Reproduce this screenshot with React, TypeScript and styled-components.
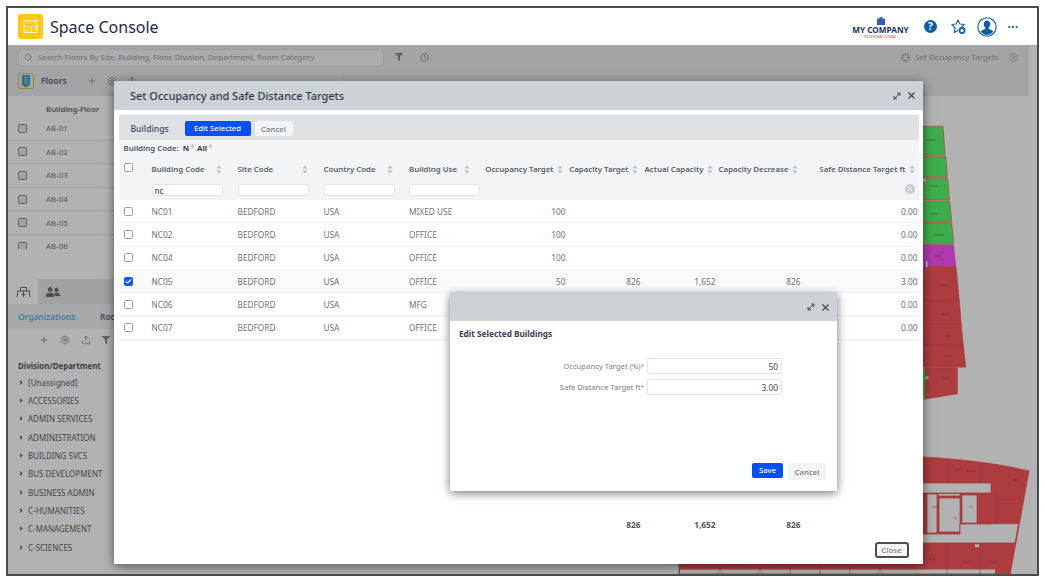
import React from 'react';
import styled, { createGlobalStyle } from 'styled-components';
import { Search, Clock, Plus, Settings, Upload, X, MoveDiagonal, Crosshair, Check, Square, BarChart3 } from 'lucide-react';
import { FaUserFriends, FaFilter, FaCaretRight } from 'react-icons/fa';

const Global = createGlobalStyle`
  html, body { margin: 0; padding: 0; background: #fff; }
  * { box-sizing: border-box; }
  body { font-family: "Noto Sans", "Open Sans", sans-serif; overflow: hidden; }
`;

const Frame = styled.div`
  position: relative; margin: 6px; width: 1033px; height: 570px; border: 2px solid #4b4b4d;
  background: #fff; overflow: hidden; display: flex; flex-direction: column;
`;
const TopBar = styled.header`
  height: 37px; flex: none; display: flex; align-items: center; padding: 0 19px 0 10px; background: #fff;
`;
const AppName = styled.h1`
  margin: 0 0 0 7px; font-size: 16px; font-weight: 400; color: #1b2b4b; line-height: 24px; letter-spacing: 0;
`;
const TopRight = styled.div`margin-left: auto; display: flex; align-items: center;`;
const Company = styled.div`
  width: 57px; margin-right: 15px; display: flex; flex-direction: column; align-items: center; margin-top: 2px;
`;
const CompanyName = styled.span`font-size: 8.2px; font-weight: 700; line-height: 9px; color: #24365e; white-space: nowrap;`;
const CompanySub = styled.span`font-size: 4.2px; line-height: 5px; color: #d9534f; letter-spacing: .1px;`;
const HelpDot = styled.span`
  width: 13px; height: 13px; border-radius: 50%; background: #0d5cab; color: #fff; font-size: 10px; font-weight: 700;
  line-height: 13px; text-align: center; margin-right: 14px;
`;
const TopIcon = styled.span<{ $gap: number }>`display: flex; margin-right: ${p => p.$gap}px;`;

const Workspace = styled.div`flex: 1; min-height: 0; display: flex; flex-direction: column; border-top: 1px solid #ececec;`;
const Band = styled.div`
  height: 50px; flex: none; margin-right: 8px; background: #e8ebef; display: flex; flex-direction: column;
`;
const SearchRow = styled.div`height: 25px; flex: none; display: flex; align-items: center; padding: 0 0 3px 10px;`;
const SearchBox = styled.div`
  width: 366px; height: 17px; border: 1px solid #dfe1e4; border-radius: 2px; background: #f4f6f9;
  display: flex; align-items: center; padding-left: 5px; gap: 5px; color: #9da0a4; font-size: 7.85px;
`;
const IconSlot = styled.span<{ $x: number; $c?: string }>`
  display: flex; margin-left: ${p => p.$x}px; color: ${p => p.$c || '#8b8e93'};
`;
const TargetsLink = styled.span`font-size: 7.9px; color: #9da0a4; margin-left: 5px;`;
const ToolsRow = styled.div`height: 25px; flex: none; display: flex; align-items: center; padding: 0 0 5px 10px; overflow: hidden;`;
const FloorsBadge = styled.span`
  width: 16px; height: 16px; border: 1px solid #f1c232; border-radius: 2px; display: flex; align-items: center; justify-content: center;
`;
const FloorsLabel = styled.span`margin-left: 7px; font-size: 8.6px; font-weight: 600; color: #5f6368;`;
const Splitter = styled.span`width: 4px; height: 25px; margin: -14px 0 0 200px; background: #f0f1f2; flex: none;`;
const Crumb = styled.span`margin: 13px 0 0 14px; font-size: 8px; font-weight: 600; color: #55668a; white-space: nowrap; width: 195px;`;
const GhostTools = styled.div`display: flex; margin-top: 11px;`;

const Body = styled.div`flex: 1; min-height: 0; display: flex;`;
const Sidebar = styled.aside`width: 333px; flex: none; display: flex; flex-direction: column;`;
const ListPane = styled.div`height: 153px; flex: none; overflow: hidden; margin-bottom: 30px;`;
const ListHead = styled.div`
  height: 21px; padding: 5px 0 0 38px; font-size: 7.8px; font-weight: 600; color: #6b6e73; line-height: 17px;
`;
const FloorRow = styled.div`
  height: 23.6px; display: flex; align-items: center; border-bottom: 1px solid #e4e4e4; padding-left: 10px;
  font-size: 7.9px; color: #7a7c80;
`;
const FloorCode = styled.span`margin-left: 19px;`;
const TabStrip = styled.div`height: 25px; flex: none; display: flex; background: #e6e8eb;`;
const IconTab = styled.div<{ $on?: boolean }>`
  width: 30px; display: flex; align-items: center; justify-content: center; background: ${p => p.$on ? '#fff' : 'transparent'}; color: #6d7074;
`;
const SubTabs = styled.div`
  height: 25px; flex: none; display: flex; align-items: center; padding-left: 10px; background: #f0f2f4; font-size: 8.4px; font-weight: 600; color: #6d7074;
`;
const SubTab = styled.span<{ $on?: boolean }>`
  width: 82px; color: ${p => p.$on ? '#58b8dc' : '#6d7074'};
`;
const TreeTools = styled.div`height: 22px; flex: none; display: flex; align-items: center; padding-left: 31px; gap: 11px; color: #8a8d92;`;
const TreeTitle = styled.div`padding: 8px 0 0 10px; height: 22px; font-size: 7.9px; font-weight: 700; color: #575b62; line-height: 14px;`;
const TreeItem = styled.div`
  height: 18.35px; display: flex; align-items: center; padding-left: 10px; font-size: 8px; color: #64676c; gap: 3px; white-space: nowrap;
  & > svg { color: #64676c; flex: none; }
`;
const Canvas = styled.main`flex: 1; min-width: 0; & > svg { display: block; }`;
const Dim = styled.div`position: absolute; left: 0; right: 0; top: 37px; bottom: 0; background: rgba(0,0,0,.3);`;

const Dialog = styled.section`
  position: absolute; left: 106px; top: 73px; width: 809px; height: 483px; background: #fff;
  box-shadow: 0 2px 10px rgba(0,0,0,.55); display: flex; flex-direction: column;
`;
const DialogHead = styled.div<{ $h: number }>`
  height: ${p => p.$h}px; flex: none; background: #cdd2d6; display: flex; align-items: center; padding: 0 6px 0 16px; color: #3e4650;
`;
const DialogTitle = styled.h2`margin: 0; font-size: 10.95px; font-weight: 500; color: #2f3a4c; flex: 1; line-height: 16px;`;
const HeadIcons = styled.div`display: flex; align-items: center; gap: 4px;`;
const DialogBody = styled.div`flex: 1; min-height: 0; padding: 5px 4.5px 6px; display: flex; flex-direction: column;`;
const ActionBar = styled.div`
  height: 25px; flex: none; background: #dfe2e5; display: flex; align-items: center; padding: 2px 0 0 12px;
`;
const BarTitle = styled.span`font-size: 8.6px; font-weight: 500; color: #3f4a5a; width: 54px;`;
const PrimaryBtn = styled.button<{ $w: number }>`
  width: ${p => p.$w}px; height: 15px; padding: 0; border: 0; border-radius: 2px; background: #0050ff; color: #fff;
  font: 500 7.7px "Noto Sans", sans-serif; line-height: 15px;
`;
const GhostBtn = styled.button<{ $w: number; $h: number; $ml: number }>`
  width: ${p => p.$w}px; height: ${p => p.$h}px; margin-left: ${p => p.$ml}px; padding: 0; border: 0; border-radius: 2px; background: #f3f4f6; color: #73777c;
  font: 500 7.9px "Noto Sans", sans-serif;
`;
const TableHead = styled.div`height: 60px; flex: none; background: #f3f4f6; display: flex; flex-direction: column;`;
const Letters = styled.div`
  height: 15px; flex: none; padding-left: 5px; display: flex; align-items: center; gap: 3px; font-size: 7.85px; font-weight: 600; color: #4d525a;
`;
const LetterKey = styled.b<{ $ml?: number }>`font-weight: 700; margin-left: ${p => p.$ml || 0}px; color: #3d4249;`;
const Count = styled.span`font-size: 5px; color: #a5a8ad; margin: -3px 0 0 -1px;`;
const COLS = '33px 86px 86px 85.5px 76.5px 80px 75px 75px 85px 117px';
const HeadRow = styled.div`height: 28px; flex: none; display: grid; grid-template-columns: ${COLS}; align-items: center;`;
const FilterRow = styled.div`height: 17px; flex: none; display: grid; grid-template-columns: ${COLS}; align-items: start;`;
const HeadCell = styled.div<{ $right?: boolean }>`
  display: flex; align-items: center; white-space: nowrap; font-size: 7.85px; font-weight: 600; color: #5a5f66;
  ${p => p.$right ? 'justify-content: flex-end; gap: 3px; padding-right: 3px;' : 'justify-content: space-between; padding-right: 16px;'}
`;
const CheckCell = styled.div`display: flex; padding-left: 5px; margin-top: -3px;`;
const FilterInput = styled.input`
  display: block; width: 71px; height: 12px; margin-top: 1px; border: 1px solid #e3e5e8; border-radius: 2px; background: #fff; padding: 0 2px;
  font: 500 8px "Noto Sans", sans-serif; color: #44484e; outline: none;
`;
const ClearCell = styled.div`grid-column: 10; display: flex; justify-content: flex-end; padding-right: 3px; margin-top: 1px;`;
const Row = styled.div<{ $sel?: boolean }>`
  height: 23.3px; flex: none; display: grid; grid-template-columns: ${COLS}; align-items: center;
  background: ${p => p.$sel ? '#fafafa' : '#fff'}; border-bottom: 1px solid #f0f1f2; font-size: 8.3px; color: #6f7378;
`;
const Cell = styled.div<{ $right?: boolean }>`
  text-align: ${p => p.$right ? 'right' : 'left'}; white-space: nowrap;
`;
const RowCheck = styled.div`display: flex; padding-left: 5px;`;
const Totals = styled.div`
  margin-top: auto; height: 16px; flex: none; display: grid; grid-template-columns: ${COLS}; align-items: center;
  font-size: 8.3px; font-weight: 700; color: #53575d;
`;
const CloseRow = styled.div`height: 16px; margin-top: 10px; flex: none; display: flex; justify-content: flex-end; padding-right: 10px;`;
const CloseBtn = styled.button`
  width: 34px; height: 16px; padding: 0; border: 2px solid #4a4d52; border-radius: 3px; background: #f6f7f8; color: #7c8085;
  font: 500 7.9px "Noto Sans", sans-serif;
`;
const CheckBox = styled.span<{ $on?: boolean }>`
  width: 9px; height: 9px; flex: none; border-radius: 1.5px; display: flex; align-items: center; justify-content: center;
  border: 1px solid ${p => p.$on ? '#0a5cff' : '#9a9da1'}; background: ${p => p.$on ? '#0a5cff' : '#fff'}; color: #fff;
`;
const FloorBox = styled(CheckBox)`border-color: #888; background: #e8e8e8;`;

const SubDialog = styled.section`
  position: absolute; left: 442px; top: 285px; width: 387px; height: 198px; background: #fff;
  box-shadow: 0 2px 9px rgba(0,0,0,.55); display: flex; flex-direction: column;
`;
const SubTitle = styled.h3`margin: 0; padding: 6px 0 0 9px; height: 37px; flex: none; font-size: 8.25px; font-weight: 700; color: #36405a; line-height: 14px;`;
const Form = styled.div`flex: 1; display: flex; flex-direction: column; gap: 5px;`;
const FormRow = styled.label`display: flex; align-items: center; height: 16px;`;
const FormLabel = styled.span`width: 194px; text-align: right; font-size: 7.7px; color: #7c8085;`;
const Req = styled.span`color: #d9534f; font-size: 6px; vertical-align: 1px;`;
const FormInput = styled.input`
  width: 135px; height: 16px; margin-left: 3px; border: 1px solid #e2e4e7; border-radius: 2px; padding: 0 3px; text-align: right;
  font: 400 8.3px "Noto Sans", sans-serif; color: #44484e; outline: none; background: #fff;
`;
const SubFoot = styled.div`height: 28px; flex: none; display: flex; align-items: flex-start; justify-content: flex-end; padding-right: 11px;`;

const Sort = () => (
  <svg width="6" height="9" viewBox="0 0 6 9" style={{ flex: 'none' }}>
    <path d="M3 .5 5.500 3.500H.5zM3 8.500 .5 5.500h5z" fill="#b9bdc1" />
  </svg>
);
const LogoMark = () => (
  <svg width="25" height="25" viewBox="0 0 25 25">
    <rect width="25" height="25" rx="3" fill="#ffc90a" />
    <path d="M6 6.500h13v12H6zM6 12.500h5M14 12.500h5M9 6.500v3M12.500 6.500v3.500M16 6.500v3M9 15v3.500M13 12.500v6M16 15h3" fill="none" stroke="#fff3bf" strokeWidth="1.100" />
  </svg>
);
const Bag = () => (
  <svg width="8" height="8" viewBox="0 0 8 8"><path d="M0 2h8v6H0zM2.600 2V.4h2.800V2" fill="#2b5fb8" stroke="#2b5fb8" strokeWidth=".6" /></svg>
);
const StarGear = () => (
  <svg width="16" height="16" viewBox="0 0 16 16">
    <path d="M10.200 8.300 13.300 5.500 8.900 5 7 1 5.100 5 .8 5.500 4.100 8.700 3.200 13.400 7.300 11.200" fill="none" stroke="#1561ad" strokeWidth="1.100" strokeLinejoin="round" />
    <circle cx="11" cy="11.500" r="2.500" fill="none" stroke="#1561ad" strokeWidth="1.800" />
  </svg>
);
const Avatar = () => (
  <svg width="20" height="20" viewBox="0 0 20 20">
    <circle cx="10" cy="10" r="9.200" fill="#fff" stroke="#1561ad" strokeWidth="1.100" />
    <path d="M10 3.600c2 0 3.200 1.600 3.200 3.700 0 1.500-.6 2.800-1.500 3.500v1.100c1.800.6 3.700 1.200 4.500 2.900A8 8 0 0 1 10 18a8 8 0 0 1-6.200-3.200c.8-1.700 2.700-2.300 4.500-2.900v-1.100c-.9-.7-1.500-2-1.500-3.500 0-2.100 1.200-3.700 3.200-3.700z" fill="#0d5cab" />
  </svg>
);
const Dots = () => (
  <svg width="10" height="4" viewBox="0 0 10 4"><g fill="#0d5cab"><circle cx="1.300" cy="2" r="1.100" /><circle cx="5" cy="2" r="1.100" /><circle cx="8.700" cy="2" r="1.100" /></g></svg>
);
const Building = () => (
  <svg width="10" height="12" viewBox="0 0 10 12"><path d="M1 0h8v10.500H7V12H3v-1.500H1z" fill="#4aa3c7" /><path d="M3 2.500h4M3 5h4M3 7.500h4" stroke="#8fd0e6" strokeWidth=".9" /></svg>
);
const DeskIcon = () => (
  <svg width="15" height="12" viewBox="0 0 15 12" fill="none" stroke="#6d7074" strokeWidth="1">
    <path d="M4.500 4.500V1.500h6v3M1 5h13M2 5l-1 6M13 5l1 6M5.500 8.500h4M7.500 5v6" />
  </svg>
);
const SmallFilter = () => <FaFilter size={8} />;

const FloorPlan = () => (
  <svg width="696" height="479" viewBox="341 95 696 479">
    <g fill="#58f86c" stroke="#ec7e5a" strokeWidth=".9">
      <path d="M915 125.300H943L945 154H915z" />
      <path d="M915 155.300H945.700L947.300 176H915z" />
      <path d="M915 177.300H947.700L949.300 198.700H915z" />
      <path d="M915 200H949.700L951.700 221H915z" />
      <path d="M915 222H951.700L953.700 243.300H915z" />
      <path d="M915 367H928V375H925.500V398H915z" />
    </g>
    <path d="M915 244H953.700L956 265.700H915z" fill="#f852f8" stroke="#f060f0" strokeWidth=".5" />
    <g fill="#f8565a" stroke="#f04a4e" strokeWidth=".7">
      <path d="M915 265.700H956L959.300 300H915z" />
      <path d="M915 300H959.300L961.200 323.300H915z" />
      <path d="M915 323.300H961.200L963.200 344H915z" />
      <path d="M915 344H963.200L965.700 366H915z" />
      <path d="M925.500 366.700H957.300V392.700L925.500 398z" />
      <path d="M679 564.500V456H923C960 458 995 462 1029 470L1010 574H679z" />
    </g>
    <g fill="#fff" stroke="#f04a4e" strokeWidth=".7">
      <rect x="922.500" y="177" width="4" height="4" stroke="#ec7e5a" />
      <rect x="925.500" y="260" width="2.500" height="6.500" stroke="#f852f8" />
      <rect x="925.500" y="375.500" width="2.500" height="2.500" stroke="#58f86c" />
      <path d="M900 482H991V492H900z" />
      <path d="M927 493H937V532H927z" />
      <path d="M939 497H960V531H939z" />
      <path d="M938 492.500H960V495H938z" />
      <path d="M962 494H977V522H962z" />
      <path d="M960 523H990.700V522.700H1018.500L1015 542H900V533H960z" />
      <path d="M974.500 543H980V546.500H974.500z" />
      <path d="M680 568.500H995V572.500H680z" stroke="none" />
      <path d="M995 574H1010L1011 568H995z" stroke="none" fill="#f8565a" />
    </g>
    <g stroke="#e8444a" strokeWidth=".6" fill="none">
      <path d="M948 458.500V482M981 462.500V482M997 492V522M1000 498.500H1023M947 542V574M980 542V574M720 564.500V574M760 564.500V574M790 564.500V574M820 564.500V574M850 564.500V574M880 564.500V574" />
    </g>
    <g stroke="#704040" strokeWidth=".5">
      <path d="M926 139h9M929 185h8M930 213h7M934 234h10M935 255h6M939 284h9M942 313h8M946 335h3M944 355h8M943 377h6M955 469h5M967 470h9M1014 479h3M932 506h5M954 517h3M969 506h4M929 558h6M962 561h7M991 561h6" />
    </g>
  </svg>
);

const rows = [
  ['NC01', 'BEDFORD', 'USA', 'MIXED USE', '100', '', '', '', '0.00'],
  ['NC02', 'BEDFORD', 'USA', 'OFFICE', '100', '', '', '', '0.00'],
  ['NC04', 'BEDFORD', 'USA', 'OFFICE', '100', '', '', '', '0.00'],
  ['NC05', 'BEDFORD', 'USA', 'OFFICE', '50', '826', '1,652', '826', '3.00'],
  ['NC06', 'BEDFORD', 'USA', 'MFG', '', '', '', '', '0.00'],
  ['NC07', 'BEDFORD', 'USA', 'OFFICE', '', '', '', '', '0.00'],
];
const tree = ['[Unassigned]', 'ACCESSORIES', 'ADMIN SERVICES', 'ADMINISTRATION', 'BUILDING SVCS', 'BUS DEVELOPMENT', 'BUSINESS ADMIN', 'C-HUMANITIES', 'C-MANAGEMENT', 'C-SCIENCES'];
const leftHeads = ['Building Code', 'Site Code', 'Country Code', 'Building Use'];
const rightHeads = ['Occupancy Target', 'Capacity Target', 'Actual Capacity', 'Capacity Decrease', 'Safe Distance Target ft'];

export default function App() {
  return (
    <>
      <Global />
      <Frame>
        <TopBar>
          <LogoMark />
          <AppName>Space Console</AppName>
          <TopRight>
            <Company>
              <Bag />
              <CompanyName>MY COMPANY</CompanyName>
              <CompanySub>INTERNATIONAL</CompanySub>
            </Company>
            <HelpDot>?</HelpDot>
            <TopIcon $gap={10}><StarGear /></TopIcon>
            <TopIcon $gap={11}><Avatar /></TopIcon>
            <Dots />
          </TopRight>
        </TopBar>
        <Workspace>
          <Band>
            <SearchRow>
              <SearchBox><Search size={9} color="#9da0a4" />Search Floors By Site, Building, Floor, Division, Department, Room Category</SearchBox>
              <IconSlot $x={11}><FaFilter size={8} /></IconSlot>
              <IconSlot $x={17}><Clock size={9} /></IconSlot>
              <IconSlot $x={472}><Crosshair size={9} /></IconSlot>
              <TargetsLink>Set Occupancy Targets</TargetsLink>
              <IconSlot $x={9} $c="#b4b6b9"><Settings size={11} /></IconSlot>
            </SearchRow>
            <ToolsRow>
              <FloorsBadge><Building /></FloorsBadge>
              <FloorsLabel>Floors</FloorsLabel>
              <IconSlot $x={20}><Plus size={10} /></IconSlot>
              <IconSlot $x={10}><Settings size={10} /></IconSlot>
              <IconSlot $x={10}><Upload size={10} /></IconSlot>
              <Splitter />
              <Crumb>B-DOCKET 04 1 1 OFFICE</Crumb>
              <GhostTools>
                <IconSlot $x={0} $c="#55668a"><Square size={9} /></IconSlot>
                <IconSlot $x={15} $c="#39507e"><BarChart3 size={10} /></IconSlot>
                <IconSlot $x={14} $c="#39507e"><BarChart3 size={10} /></IconSlot>
                <IconSlot $x={12} $c="#7a3a4a"><BarChart3 size={10} /></IconSlot>
                <IconSlot $x={13}><Settings size={10} /></IconSlot>
                <IconSlot $x={13}><Settings size={10} /></IconSlot>
                <IconSlot $x={13}><Settings size={10} /></IconSlot>
                <IconSlot $x={13}><Upload size={10} /></IconSlot>
              </GhostTools>
            </ToolsRow>
          </Band>
          <Body>
            <Sidebar>
              <ListPane>
                <ListHead>Building-Floor</ListHead>
                {['AB-01', 'AB-02', 'AB-03', 'AB-04', 'AB-05', 'AB-06'].map(c => (
                  <FloorRow key={c}><FloorBox /><FloorCode>{c}</FloorCode></FloorRow>
                ))}
              </ListPane>
              <TabStrip>
                <IconTab $on><DeskIcon /></IconTab>
                <IconTab><FaUserFriends size={14} /></IconTab>
              </TabStrip>
              <SubTabs><SubTab $on>Organizations</SubTab><SubTab>Rooms</SubTab></SubTabs>
              <TreeTools><Plus size={10} /><Settings size={10} /><Upload size={10} /><SmallFilter /></TreeTools>
              <TreeTitle>Division/Department</TreeTitle>
              {tree.map(t => (<TreeItem key={t}><FaCaretRight size={7} />{t}</TreeItem>))}
            </Sidebar>
            <Canvas><FloorPlan /></Canvas>
          </Body>
        </Workspace>
        <Dim />
        <Dialog>
          <DialogHead $h={29}>
            <DialogTitle>Set Occupancy and Safe Distance Targets</DialogTitle>
            <HeadIcons><MoveDiagonal size={10} strokeWidth={2.4} /><X size={11} strokeWidth={2.4} /></HeadIcons>
          </DialogHead>
          <DialogBody>
            <ActionBar>
              <BarTitle>Buildings</BarTitle>
              <PrimaryBtn $w={66}>Edit Selected</PrimaryBtn>
              <GhostBtn $w={38} $h={15} $ml={4}>Cancel</GhostBtn>
            </ActionBar>
            <TableHead>
              <Letters>Building Code:<LetterKey $ml={1}>N</LetterKey><Count>6</Count><LetterKey>All</LetterKey><Count>6</Count></Letters>
              <HeadRow>
                <CheckCell><CheckBox /></CheckCell>
                {leftHeads.map(h => <HeadCell key={h}>{h}<Sort /></HeadCell>)}
                {rightHeads.map(h => <HeadCell key={h} $right>{h}<Sort /></HeadCell>)}
              </HeadRow>
              <FilterRow>
                <span />
                <div><FilterInput defaultValue="nc" /></div>
                <div><FilterInput /></div>
                <div><FilterInput /></div>
                <div><FilterInput /></div>
                <ClearCell>
                  <svg width="10" height="10" viewBox="0 0 10 10"><circle cx="5" cy="5" r="5" fill="#c9ccd0" /><path d="M3.200 3.200l3.600 3.600M6.800 3.200l-3.600 3.600" stroke="#f3f4f6" strokeWidth="1" /></svg>
                </ClearCell>
              </FilterRow>
            </TableHead>
            {rows.map(r => {
              const sel = r[0] === 'NC05';
              return (
                <Row key={r[0]} $sel={sel}>
                  <RowCheck><CheckBox $on={sel}>{sel && <Check size={7} strokeWidth={4} />}</CheckBox></RowCheck>
                  {r.map((v, i) => <Cell key={i} $right={i > 3}>{v}</Cell>)}
                </Row>
              );
            })}
            <Totals>
              <span /><span /><span /><span /><span /><span />
              <Cell $right>826</Cell><Cell $right>1,652</Cell><Cell $right>826</Cell>
            </Totals>
            <CloseRow><CloseBtn>Close</CloseBtn></CloseRow>
          </DialogBody>
        </Dialog>
        <SubDialog>
          <DialogHead $h={28}>
            <DialogTitle />
            <HeadIcons><MoveDiagonal size={10} strokeWidth={2.4} /><X size={11} strokeWidth={2.4} /></HeadIcons>
          </DialogHead>
          <SubTitle>Edit Selected Buildings</SubTitle>
          <Form>
            <FormRow><FormLabel>Occupancy Target (%)<Req>*</Req></FormLabel><FormInput defaultValue="50" /></FormRow>
            <FormRow><FormLabel>Safe Distance Target ft<Req>*</Req></FormLabel><FormInput defaultValue="3.00" /></FormRow>
          </Form>
          <SubFoot>
            <PrimaryBtn $w={31}>Save</PrimaryBtn>
            <GhostBtn $w={38} $h={17} $ml={5}>Cancel</GhostBtn>
          </SubFoot>
        </SubDialog>
      </Frame>
    </>
  );
}
